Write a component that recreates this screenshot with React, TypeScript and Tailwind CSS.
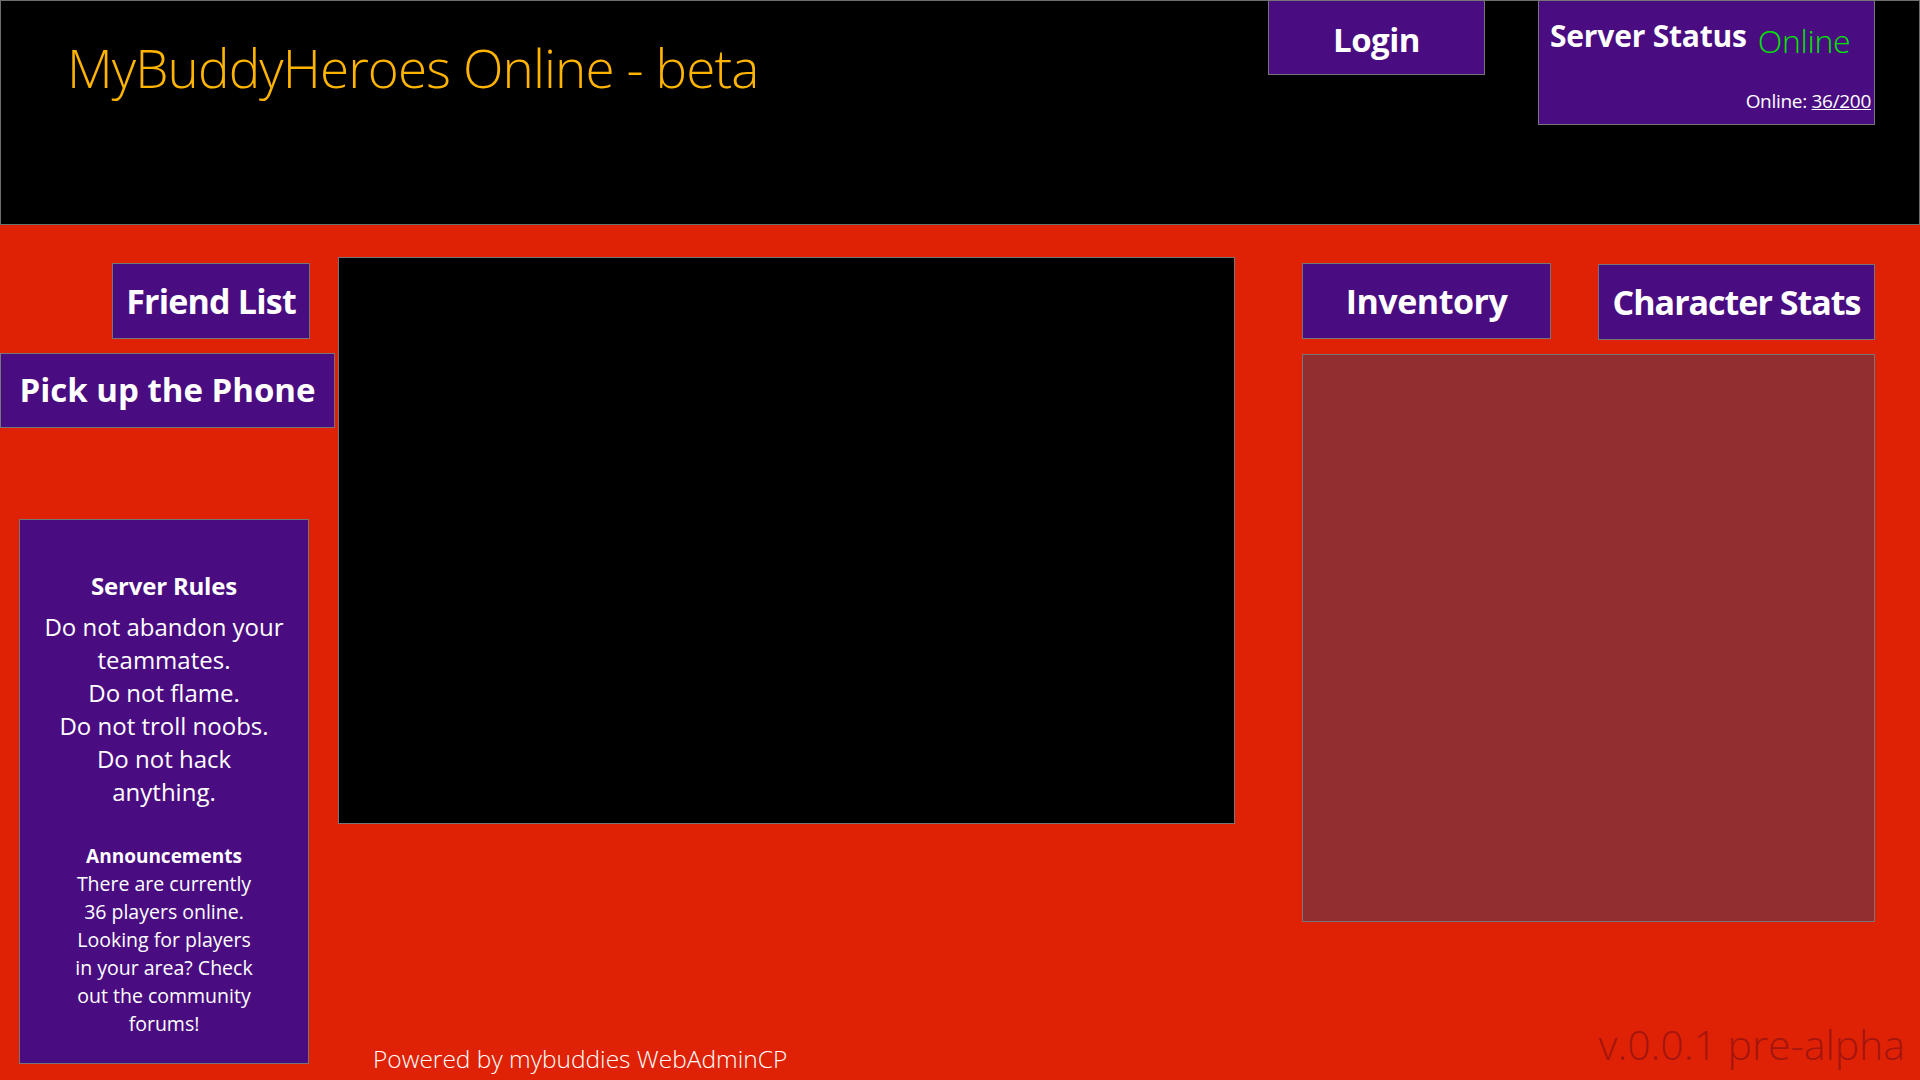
import React from 'react';

const font = { fontFamily: '"Open Sans", "Noto Sans", sans-serif' };

function NavBox({ label, className }: { label: string; className: string }) {
  return (
    <div
      className={`flex items-center justify-center border border-[#767676] bg-[#4a0d81] font-bold text-white leading-none ${className}`}
    >
      {label}
    </div>
  );
}

export default function App() {
  return (
    <div className="w-[1920px] h-[1080px] overflow-hidden bg-[#df2205] flex flex-col" style={font}>
      {/* header */}
      <header className="h-[225px] shrink-0 bg-black border border-[#6e6e6e] flex items-start">
        <h1 className="ml-[66px] mt-[40px] text-[53px] font-light leading-none tracking-[-0.9px] text-[#ffb400] whitespace-nowrap">
          MyBuddyHeroes Online - beta
        </h1>
        <NavBox label="Login" className="ml-auto -mt-px w-[217px] h-[75px] pt-1 text-[33px] tracking-[-0.5px]" />
        <div className="ml-[53px] mr-[44px] -mt-px w-[337px] h-[125px] border border-[#767676] bg-[#4a0d81] flex flex-col text-white">
          <div className="flex items-start pl-[11px] whitespace-nowrap">
            <span className="mt-[20px] text-[30px] font-bold leading-none tracking-[-0.2px]">Server Status</span>
            <span className="ml-[11px] mt-[24px] text-[32px] font-light leading-none tracking-[-0.3px] text-[#00e600]">
              Online
            </span>
          </div>
          <div className="mt-[35px] pr-[3px] text-right text-[19px] leading-none tracking-[-0.3px]">
            Online: <span className="underline">36/200</span>
          </div>
        </div>
      </header>

      {/* main area */}
      <main className="flex flex-1 items-start">
        {/* left column */}
        <div className="w-[335px] shrink-0 flex flex-col items-start">
          <NavBox label="Friend List" className="mt-[38px] ml-[112px] w-[198px] h-[76px] text-[34px] tracking-[-0.8px]" />
          <NavBox label="Pick up the Phone" className="mt-[14px] w-[335px] h-[75px] pb-[3px] text-[33px]" />
          <div className="mt-[91px] ml-[19px] w-[290px] h-[545px] border border-[#767676] bg-[#4a0d81] text-white text-center flex flex-col pt-[51px]">
            <div className="text-[24px] font-bold leading-[30px] tracking-[-0.2px]">Server Rules</div>
            <div className="mt-[9px] text-[24px] leading-[33px] whitespace-nowrap">
              <div>Do not abandon your</div>
              <div>teammates.</div>
              <div>Do not flame.</div>
              <div>Do not troll noobs.</div>
              <div>Do not hack</div>
              <div>anything.</div>
            </div>
            <div className="mt-[35px] text-[19px] font-bold leading-[26px]">Announcements</div>
            <div className="mt-px text-[19.5px] leading-[28px] whitespace-nowrap">
              <div>There are currently</div>
              <div>36 players online.</div>
              <div>Looking for players</div>
              <div>in your area? Check</div>
              <div>out the community</div>
              <div>forums!</div>
            </div>
          </div>
        </div>

        {/* center */}
        <div className="ml-[3px] w-[897px] shrink-0 flex flex-col">
          <div className="mt-[32px] h-[567px] bg-black border border-[#767676]" />
          <div className="mt-[223px] ml-[35px] text-[24.5px] font-light leading-none text-white whitespace-nowrap">
            Powered by mybuddies WebAdminCP
          </div>
        </div>

        {/* right column */}
        <div className="ml-[67px] w-[603px] shrink-0 flex flex-col">
          <div className="mt-[38px] flex items-start gap-[47px]">
            <NavBox label="Inventory" className="w-[249px] h-[76px] text-[34px] tracking-[-0.5px]" />
            <NavBox label="Character Stats" className="mt-px w-[277px] h-[76px] text-[34px] tracking-[-1px]" />
          </div>
          <div className="mt-[14px] w-[573px] h-[568px] bg-[#932e30] border border-[#767676]" />
          <div className="mt-[102px] text-right text-[41px] font-light leading-none text-[#a3150e] whitespace-nowrap">
            v.0.0.1 pre-alpha
          </div>
        </div>
      </main>
    </div>
  );
}
